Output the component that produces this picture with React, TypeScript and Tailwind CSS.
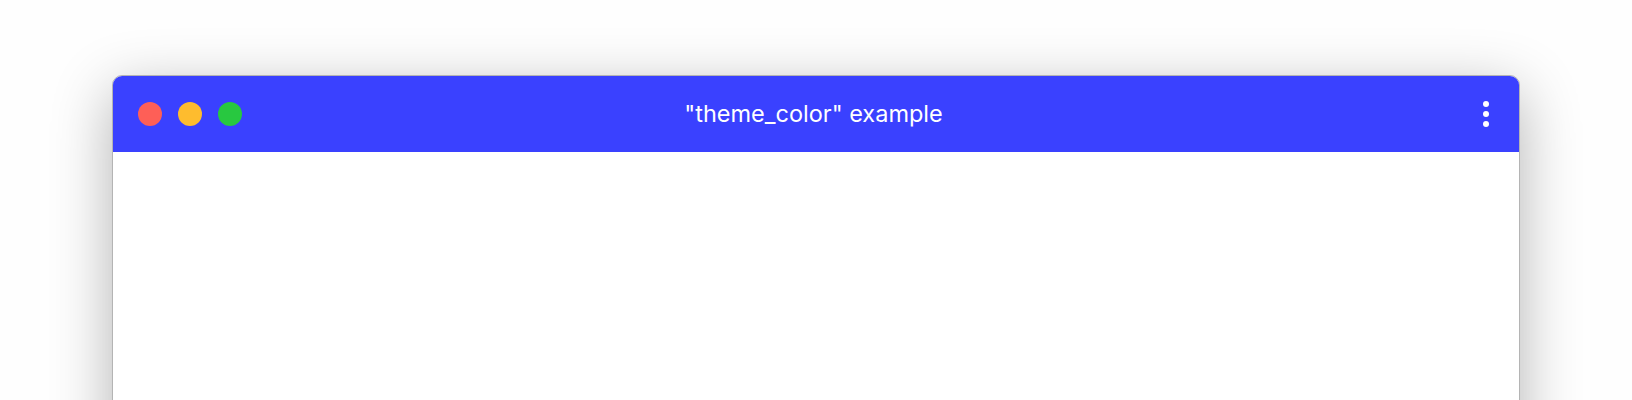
export default function App() {
  return (
    <div className="h-[400px] overflow-hidden bg-[#fefefe] px-[112px] pt-[75px]">
      <div className="h-[400px] overflow-hidden rounded-t-[10px] border border-[#b4b4b4] bg-white shadow-[0_16px_60px_rgba(0,0,0,0.3)]">
        <div className="grid h-[76px] grid-cols-[1fr_auto_1fr] items-center bg-[#3a41ff] pl-[25px] pr-[30px]">
          <div className="flex gap-[16px]">
            <span className="h-[24px] w-[24px] rounded-full bg-[#fe5f57]" />
            <span className="h-[24px] w-[24px] rounded-full bg-[#febc2e]" />
            <span className="h-[24px] w-[24px] rounded-full bg-[#28c840]" />
          </div>
          <div className="text-center text-[23.5px] text-white" style={{ fontFamily: 'Inter, "Noto Sans", sans-serif' }}>
            "theme_color" example
          </div>
          <div className="flex flex-col items-end gap-[4px]">
            <span className="h-[6px] w-[6px] rounded-full bg-white" />
            <span className="h-[6px] w-[6px] rounded-full bg-white" />
            <span className="h-[6px] w-[6px] rounded-full bg-white" />
          </div>
        </div>
      </div>
    </div>
  )
}
